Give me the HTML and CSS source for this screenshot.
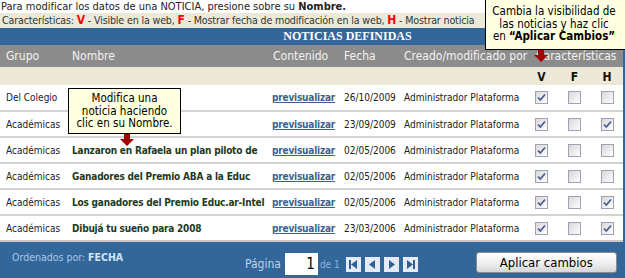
FILE: index.html
```html
<!DOCTYPE html>
<html lang="es">
<head>
  <meta charset="UTF-8" />
  <title>Noticias definidas</title>
  <link rel="stylesheet" href="styles.css">
</head>
<body>
  <div class="page">
    <p class="hint">Para modificar los datos de una NOTICIA, presione sobre su <b>Nombre.</b></p>
    <div class="legend-bar">
      <p class="legend">Características: <b class="key">V</b> - Visible en la web, <b class="key">F</b> - Mostrar fecha de modificación en la web, <b class="key">H</b> - Mostrar noticia</p>
    </div>

    <div class="panel">
      <div class="panel-title">NOTICIAS DEFINIDAS</div>

      <table class="news">
        <colgroup>
          <col class="c-group"><col class="c-name"><col class="c-view"><col class="c-date"><col class="c-author">
          <col class="c-flag"><col class="c-flag"><col class="c-flag-last">
        </colgroup>
        <thead>
          <tr class="head">
            <th>Grupo</th>
            <th>Nombre</th>
            <th>Contenido</th>
            <th>Fecha</th>
            <th>Creado/modificado por</th>
            <th colspan="3" class="flags-title">Características</th>
          </tr>
          <tr class="flags">
            <th colspan="5"></th>
            <th>V</th>
            <th>F</th>
            <th>H</th>
          </tr>
        </thead>
        <tbody>
          <tr>
            <td>Del Colegio</td>
            <td class="name"><a href="#"></a></td>
            <td><a class="view" href="#">previsualizar</a></td>
            <td>26/10/2009</td>
            <td>Administrador Plataforma</td>
            <td class="flag"><span class="check on"><svg viewBox="0 0 11 11"><path d="M2 5.5 L4.3 8 L9 2.5"/></svg></span></td>
            <td class="flag"><span class="check"></span></td>
            <td class="flag"><span class="check"></span></td>
          </tr>
          <tr>
            <td>Académicas</td>
            <td class="name"><a href="#"></a></td>
            <td><a class="view" href="#">previsualizar</a></td>
            <td>23/09/2009</td>
            <td>Administrador Plataforma</td>
            <td class="flag"><span class="check on"><svg viewBox="0 0 11 11"><path d="M2 5.5 L4.3 8 L9 2.5"/></svg></span></td>
            <td class="flag"><span class="check"></span></td>
            <td class="flag"><span class="check on"><svg viewBox="0 0 11 11"><path d="M2 5.5 L4.3 8 L9 2.5"/></svg></span></td>
          </tr>
          <tr>
            <td>Académicas</td>
            <td class="name"><a href="#">Lanzaron en Rafaela un plan piloto de</a></td>
            <td><a class="view" href="#">previsualizar</a></td>
            <td>02/05/2006</td>
            <td>Administrador Plataforma</td>
            <td class="flag"><span class="check on"><svg viewBox="0 0 11 11"><path d="M2 5.5 L4.3 8 L9 2.5"/></svg></span></td>
            <td class="flag"><span class="check"></span></td>
            <td class="flag"><span class="check"></span></td>
          </tr>
          <tr>
            <td>Académicas</td>
            <td class="name"><a href="#">Ganadores del Premio ABA a la Educ</a></td>
            <td><a class="view" href="#">previsualizar</a></td>
            <td>02/05/2006</td>
            <td>Administrador Plataforma</td>
            <td class="flag"><span class="check on"><svg viewBox="0 0 11 11"><path d="M2 5.5 L4.3 8 L9 2.5"/></svg></span></td>
            <td class="flag"><span class="check"></span></td>
            <td class="flag"><span class="check"></span></td>
          </tr>
          <tr>
            <td>Académicas</td>
            <td class="name"><a href="#">Los ganadores del Premio Educ.ar-Intel</a></td>
            <td><a class="view" href="#">previsualizar</a></td>
            <td>02/05/2006</td>
            <td>Administrador Plataforma</td>
            <td class="flag"><span class="check on"><svg viewBox="0 0 11 11"><path d="M2 5.5 L4.3 8 L9 2.5"/></svg></span></td>
            <td class="flag"><span class="check"></span></td>
            <td class="flag"><span class="check on"><svg viewBox="0 0 11 11"><path d="M2 5.5 L4.3 8 L9 2.5"/></svg></span></td>
          </tr>
          <tr>
            <td>Académicas</td>
            <td class="name"><a href="#">Dibujá tu sueño para 2008</a></td>
            <td><a class="view" href="#">previsualizar</a></td>
            <td>23/03/2006</td>
            <td>Administrador Plataforma</td>
            <td class="flag"><span class="check on"><svg viewBox="0 0 11 11"><path d="M2 5.5 L4.3 8 L9 2.5"/></svg></span></td>
            <td class="flag"><span class="check"></span></td>
            <td class="flag"><span class="check on"><svg viewBox="0 0 11 11"><path d="M2 5.5 L4.3 8 L9 2.5"/></svg></span></td>
          </tr>
        </tbody>
      </table>

      <div class="panel-foot">
        <div class="order">Ordenados por: <b>FECHA</b></div>
        <div class="pager">
          <span class="page-label">Página</span>
          <input class="page-input" type="text" value="1" />
          <span class="page-total">de 1</span>
          <span class="nav">
            <button class="nav-btn" title="Primera"><svg viewBox="0 0 15 15"><rect x="3" y="3" width="2" height="9"/><path d="M11 3 L5 7.5 L11 12 Z"/></svg></button>
            <button class="nav-btn" title="Anterior"><svg viewBox="0 0 15 15"><path d="M10 3 L4 7.5 L10 12 Z"/></svg></button>
            <button class="nav-btn" title="Siguiente"><svg viewBox="0 0 15 15"><path d="M5 3 L11 7.5 L5 12 Z"/></svg></button>
            <button class="nav-btn" title="Última"><svg viewBox="0 0 15 15"><path d="M4 3 L10 7.5 L4 12 Z"/><rect x="10" y="3" width="2" height="9"/></svg></button>
          </span>
        </div>
        <button class="apply">Aplicar cambios</button>
      </div>
    </div>

    <!-- Ayudas flotantes -->
    <div class="tip tip-name">Modifica una<br>noticia haciendo<br>clic en su Nombre.</div>
    <svg class="arrow arrow-name" viewBox="0 0 14 12"><path d="M4 0 H10 V5 H14 L7 12 L0 5 H4 Z"/></svg>

    <div class="tip tip-flags">Cambia la visibilidad de<br>las noticias y haz clic<br>en <b>“Aplicar Cambios”</b></div>
    <svg class="arrow arrow-flags" viewBox="0 0 14 12"><path d="M4 0 H10 V5 H14 L7 12 L0 5 H4 Z"/></svg>
  </div>
</body>
</html>
```

FILE: styles.css
```css
/* Base */
* {
  box-sizing: border-box;
  margin: 0;
  padding: 0;
}

body {
  font-family: "DejaVu Sans Condensed", "DejaVu Sans", sans-serif;
  font-stretch: condensed;
  font-size: 11px;
  color: #222;
  background: #fff;
}

.page {
  position: relative;
  width: 625px;
  height: 278px;
  overflow: hidden;
}

/* Top help lines */
.hint {
  height: 13px;
  line-height: 13px;
  padding-left: 1px;
  white-space: nowrap;
}

.legend-bar {
  height: 15px;
  background: #ece9d8;
}

.legend {
  width: 485px;
  line-height: 15px;
  padding-left: 2px;
  font-size: 10.6px;
  letter-spacing: -0.15px;
  color: #333;
  white-space: nowrap;
  overflow: hidden;
}

.legend .key {
  color: #f00;
  font-size: 12px;
}

/* Panel */
.panel {
  border-right: 2px solid #336699;
}

.panel-title {
  height: 17px;
  line-height: 17px;
  padding-left: 72px;
  text-align: center;
  background: #336699;
  color: #fff;
  font-family: "Liberation Serif", serif;
  font-stretch: normal;
  font-weight: bold;
  font-size: 12px;
}

.news {
  width: 623px;
  border-collapse: collapse;
  table-layout: fixed;
}

.c-group { width: 66px; }
.c-name { width: 202px; }
.c-view { width: 70px; }
.c-date { width: 60px; }
.c-author { width: 127px; }
.c-flag { width: 33px; }
.c-flag-last { width: 32px; }

.news th {
  font-weight: normal;
  text-align: left;
  white-space: nowrap;
}

.head th {
  height: 22px;
  padding-left: 6px;
  background: #8c8c8c;
  color: #f2f2f2;
  font-size: 12px;
}

.head th:nth-child(3) { padding-left: 5px; }

.head th.flags-title {
  padding-left: 11px;
}

.flags th {
  height: 18px;
  background: #ece9d8;
  text-align: center;
  font-weight: bold;
  font-size: 12px;
  color: #111;
  padding-top: 2px;
}

.news td {
  height: 26px;
  padding-left: 6px;
  border-bottom: 2px solid #d2d2d2;
  white-space: nowrap;
  overflow: hidden;
  font-size: 10px;
  color: #222;
}

.news tbody tr:last-child td {
  border-bottom-color: #c8c8c8;
}

.news td:nth-child(3) { padding-left: 4px; }

.name a {
  color: #1e3a1e;
  font-weight: bold;
  font-size: 10px;
  letter-spacing: -0.2px;
  text-decoration: none;
}

.view {
  color: #3b6190;
  font-weight: bold;
  font-size: 10px;
  letter-spacing: -0.2px;
}

.news td.flag {
  padding-left: 0;
  text-align: center;
}

/* XP style checkbox */
.check {
  display: inline-block;
  width: 13px;
  height: 13px;
  border: 1px solid #9ea3b4;
  background: linear-gradient(135deg, #d8d8d8, #f6f6f6 80%, #fff);
  vertical-align: middle;
}

.check svg {
  display: block;
  width: 11px;
  height: 11px;
  fill: none;
  stroke: #4c5b94;
  stroke-width: 1.8;
}

/* Footer */
.panel-foot {
  display: flex;
  align-items: flex-start;
  height: 36px;
  background: #336699;
  color: #a9c6e8;
}

.order {
  margin: 9px 0 0 12px;
  width: 160px;
  font-size: 10.5px;
}

.order b {
  color: #d3e3f6;
}

.pager {
  display: flex;
  align-items: center;
  margin: 11px 0 0 73px;
}

.page-label {
  font-size: 12px;
  color: #bcd3ee;
  margin-right: 4px;
}

.page-input {
  width: 33px;
  height: 22px;
  border: none;
  padding-right: 3px;
  text-align: right;
  font-family: inherit;
  font-size: 15px;
  color: #000;
}

.page-total {
  margin-left: 2px;
  font-size: 10px;
  color: #8fb4de;
}

.nav {
  display: flex;
  gap: 4px;
  margin-left: 6px;
}

.nav-btn {
  width: 15px;
  height: 15px;
  border: none;
  background: #e4ebf5;
}

.nav-btn svg {
  display: block;
  width: 15px;
  height: 15px;
  fill: #2f5f95;
}

.apply {
  margin: 10px 0 0 58px;
  width: 141px;
  height: 21px;
  border: 1px solid #8a8a8a;
  border-radius: 3px;
  background: linear-gradient(#ffffff, #eeeeee 55%, #d6d6d6);
  font-family: inherit;
  font-size: 13px;
  color: #000;
}

/* Floating help notes */
.tip {
  position: absolute;
  background: #ffffe1;
  border: 1px solid #000;
  color: #000;
  text-align: center;
  font-size: 11.5px;
  line-height: 12.5px;
  white-space: nowrap;
}

.tip-name {
  left: 68px;
  top: 88px;
  width: 113px;
  height: 46px;
  padding-top: 3px;
}

.tip-flags {
  left: 485px;
  top: -1px;
  width: 142px;
  height: 51px;
  padding: 5px 4px 0 0;
}

.arrow {
  position: absolute;
  width: 14px;
  height: 12px;
  fill: #a30000;
}

.arrow-name {
  left: 120px;
  top: 134px;
}

.arrow-flags {
  left: 534px;
  top: 50px;
}
```
